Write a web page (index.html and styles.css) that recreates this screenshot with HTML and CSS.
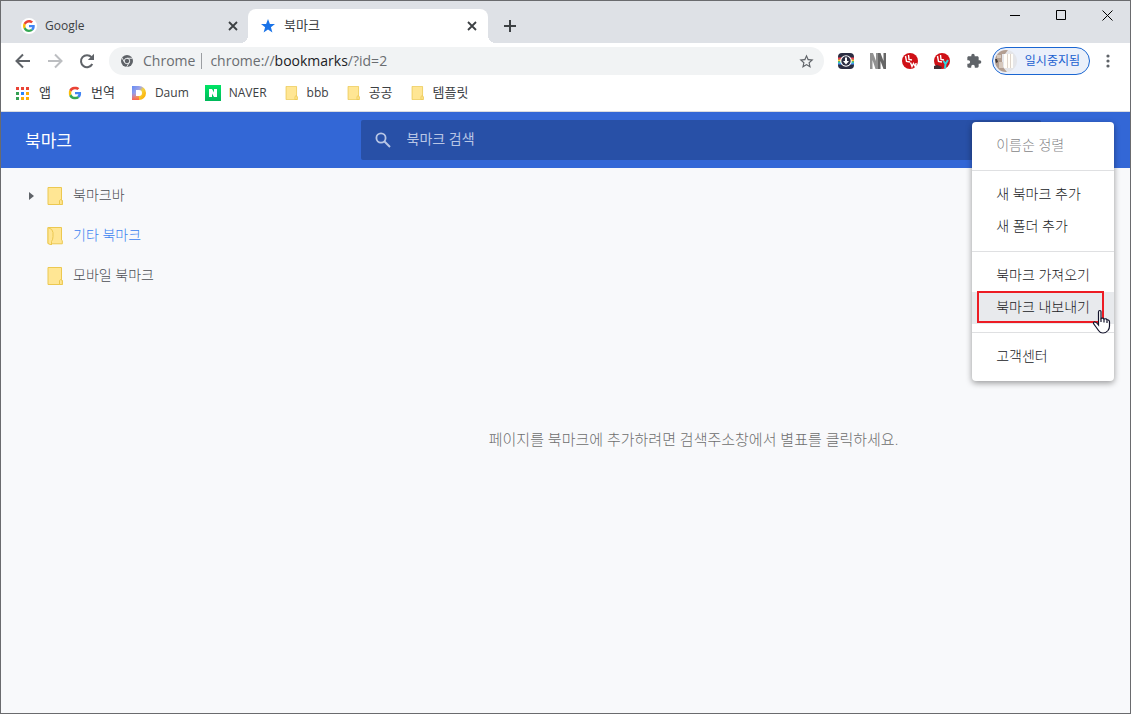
FILE: index.html
```html
<!DOCTYPE html>
<html lang="ko">
<head>
<meta charset="utf-8">
<meta name="viewport" content="width=device-width, initial-scale=1">
<title>북마크</title>
<link rel="stylesheet" href="styles.css">
</head>
<body>
<svg class="defs" width="0" height="0" aria-hidden="true">
  <defs>
    <symbol id="google" viewBox="0 0 48 48">
      <path fill="#ea4335" d="M24 9.500c3.500 0 6.700 1.200 9.200 3.600l6.900-6.900C35.900 2.400 30.500 0 24 0 14.600 0 6.500 5.400 2.600 13.200l8 6.200C12.400 13.700 17.700 9.500 24 9.500z"/>
      <path fill="#4285f4" d="M47 24.600c0-1.600-.2-3.100-.4-4.600H24v9h12.900c-.6 3-2.300 5.500-4.800 7.200l7.700 6C44.400 38 47 31.800 47 24.600z"/>
      <path fill="#fbbc05" d="M10.500 28.600A14.500 14.500 0 0 1 9.800 24c0-1.600.3-3.100.8-4.600l-8-6.200A24 24 0 0 0 0 24c0 3.900.9 7.500 2.600 10.800z"/>
      <path fill="#34a853" d="M24 48c6.500 0 11.900-2.100 15.900-5.800l-7.700-6c-2.200 1.400-4.900 2.300-8.200 2.300-6.300 0-11.600-4.200-13.500-9.900l-8 6.200C6.500 42.600 14.600 48 24 48z"/>
    </symbol>
    <symbol id="folder" viewBox="0 0 16 18">
      <path d="M1 .5h13.500v12.500l.8.800v3.700H1z" fill="#ffe694" stroke="#ecc850"/>
      <path d="M12.500 17.500v-4q1-1.800 2.800 0v4z" fill="#ffe694" stroke="#ecc850"/>
    </symbol>
    <symbol id="close" viewBox="0 0 10 10">
      <path d="M1 1l8 8M9 1L1 9" stroke="#3c4043" stroke-width="1.800"/>
    </symbol>
  </defs>
</svg>
<div class="window">
  <header class="tabstrip">
    <div class="tab">
      <span class="favicon-round"><svg width="12" height="12"><use href="#google"/></svg></span>
      <span class="tab-title">Google</span>
      <button class="tab-close" aria-label="탭 닫기"><svg width="10" height="10"><use href="#close"/></svg></button>
    </div>
    <div class="tab tab-active">
      <svg class="tab-icon" width="16" height="16" viewBox="0 0 16 16"><path fill="#1a73e8" d="M8 1l1.900 5h5.100l-4.100 3.200 1.500 5.300L8 11.400l-4.400 3.100 1.500-5.300L1 6h5.100z"/></svg>
      <span class="tab-title">북마크</span>
      <button class="tab-close" aria-label="탭 닫기"><svg width="10" height="10"><use href="#close"/></svg></button>
    </div>
    <button class="new-tab" aria-label="새 탭"><svg width="12" height="12" viewBox="0 0 12 12"><path d="M6 0v12M0 6h12" stroke="#3c4043" stroke-width="2"/></svg></button>
    <div class="window-controls">
      <button aria-label="최소화"><svg width="10" height="10"><path d="M0 5.500h10" stroke="#000"/></svg></button>
      <button aria-label="최대화"><svg width="10" height="10"><path d="M.5.5h9v9h-9z" fill="none" stroke="#000"/></svg></button>
      <button aria-label="닫기"><svg width="11" height="11"><path d="M.5.5l10 10M10.500.5l-10 10" stroke="#000"/></svg></button>
    </div>
  </header>

  <div class="toolbar">
    <button class="nav" aria-label="뒤로"><svg width="16" height="16" viewBox="0 0 16 16"><path d="M15 8H2M8 1.500L1.500 8 8 14.500" fill="none" stroke="#5f6368" stroke-width="2"/></svg></button>
    <button class="nav" aria-label="앞으로"><svg width="16" height="16" viewBox="0 0 16 16"><path d="M1 8h13M8 1.500L14.500 8 8 14.500" fill="none" stroke="#bcbec1" stroke-width="2"/></svg></button>
    <button class="nav" aria-label="새로고침"><svg width="16" height="16" viewBox="0 0 16 16"><path d="M13.300 11A6 6 0 1 1 12.500 4.200" fill="none" stroke="#5f6368" stroke-width="2"/><path d="M15 .8V7H8.800z" fill="#5f6368"/></svg></button>
    <div class="omnibox">
      <svg width="12" height="12" viewBox="0 0 24 24"><circle cx="12" cy="12" r="12" fill="#5f6368"/><circle cx="12" cy="12" r="5.500" fill="none" stroke="#f1f3f4" stroke-width="1.800"/><path d="M12 6.500h11M7.200 14.700L1.700 5.200M16.800 14.700L11.300 24" stroke="#f1f3f4" stroke-width="1.800"/></svg>
      <span class="origin">Chrome</span>
      <div class="url" role="textbox" contenteditable="true" spellcheck="false" aria-label="주소창">chrome://<span class="url-host">bookmarks</span>/?id=2</div>
      <button class="star" aria-label="북마크에 추가"><svg width="17" height="17" viewBox="0 0 24 24"><path fill="#5f6368" d="M22 9.240l-7.190-.62L12 2 9.190 8.630 2 9.240l5.460 4.730L5.820 21 12 17.270 18.180 21l-1.630-7.030zM12 15.400l-3.760 2.270 1-4.280-3.320-2.880 4.380-.38L12 6.100l1.710 4.040 4.380.38-3.320 2.880 1 4.280z"/></svg></button>
    </div>
    <div class="extensions">
      <button aria-label="다운로더"><svg width="16" height="16" viewBox="0 0 16 16"><rect width="16" height="16" rx="4" fill="#2b2d42"/><path d="M0 4.500h16v2H0z" fill="#ef4050"/><path d="M0 6.500h16v2H0z" fill="#ffd23c"/><path d="M0 8.500h16v1.500H0z" fill="#38cfa6"/><path d="M0 10h16v1.500H0z" fill="#478ff0"/><circle cx="8" cy="8" r="5.800" fill="#fff"/><circle cx="8" cy="8" r="4.700" fill="#2b2d42"/><path d="M7 4.500h2V8h2l-3 3.500L5 8h2z" fill="#fff"/></svg></button>
      <button aria-label="노트"><svg width="16" height="16" viewBox="0 0 16 16"><path d="M0 16V0h3l3 8V0h2v16H5.500L2.500 7v9z" fill="#929292"/><path d="M8 16V0h2.500l3 8V0H16v16h-2.500l-3-8v8z" fill="#666"/></svg></button>
      <button aria-label="번역 확장"><svg width="16" height="16" viewBox="0 0 16 16"><circle cx="8" cy="8" r="8" fill="#cf1016"/><path d="M3.500 3l1 5.500L8 9M6.500 2L7 6.500l3 .5" fill="none" stroke="#fff" stroke-width="1.400"/><path d="M8.500 9.500l1.500 4 1.500-3 2 3.500.5-4" fill="none" stroke="#fff" stroke-width="1.400"/></svg></button>
      <button aria-label="영상 확장"><svg width="16" height="16" viewBox="0 0 16 16"><circle cx="8" cy="8" r="8" fill="#cf1016"/><path d="M3.500 3l1 5.500L8 9M6.500 2L7 6.500l3 .5" fill="none" stroke="#fff" stroke-width="1.400"/><path d="M9.500 8l2 3 2.500-4M11.500 11l-.5 4.500" fill="none" stroke="#2bd5df" stroke-width="2"/><path d="M0 13l3-1 3 1 2 1-1 2H0z" fill="#402e35"/></svg></button>
      <button aria-label="확장 프로그램"><svg width="16" height="16" viewBox="0 0 24 24"><path fill="#5f6368" d="M20.500 11H19V7c0-1.100-.9-2-2-2h-4V3.500a2.500 2.500 0 0 0-5 0V5H4c-1.100 0-2 .9-2 2v3.800h1.500a2.700 2.700 0 0 1 0 5.400H2V20c0 1.100.9 2 2 2h3.800v-1.500a2.700 2.700 0 0 1 5.400 0V22H17c1.100 0 2-.9 2-2v-4h1.500a2.500 2.500 0 0 0 0-5z"/></svg></button>
    </div>
    <button class="profile">
      <svg width="22" height="22" viewBox="0 0 22 22"><defs><clipPath id="avatar"><circle cx="11" cy="11" r="11"/></clipPath></defs><g clip-path="url(#avatar)"><path fill="#e4e5e9" d="M0 0h22v22H0z"/><path fill="#b29e91" d="M0 0h13l-3 4H7v12l5 6H0z"/><path fill="#d5c8bd" d="M2 5h4v3H2zM4 12h4v6H4z"/><path fill="#3f3938" d="M0 9h2l1 3-2 1z"/><path fill="#fffdf8" d="M9 4h9v14H9z"/><path stroke="#ded4ca" d="M12.500 4v14M15.500 4v14"/></g></svg>
      <span>일시중지됨</span>
    </button>
    <button class="more" aria-label="Chrome 메뉴"><svg width="4" height="14" fill="#5f6368"><circle cx="2" cy="2" r="1.600"/><circle cx="2" cy="7" r="1.600"/><circle cx="2" cy="12" r="1.600"/></svg></button>
  </div>

  <nav class="bookmark-bar" aria-label="북마크바">
    <a href="#"><svg width="16" height="16" viewBox="0 0 16 16"><path fill="#ea4335" d="M1 2h3v3H1zM6 2h3v3H6zM11 2h3v3h-3z"/><path fill="#34a053" d="M1 7h3v3H1zM1 12h3v3H1z"/><path fill="#2684fc" d="M6 7h3v3H6z"/><path fill="#fbac04" d="M11 7h3v3h-3zM6 12h3v3H6zM11 12h3v3h-3z"/></svg><span class="ko">앱</span></a>
    <a href="#"><svg width="16" height="16" viewBox="-6 -6 60 60"><use href="#google" width="48" height="48"/></svg><span class="ko">번역</span></a>
    <a href="#"><svg width="16" height="16" viewBox="0 0 16 16"><defs><linearGradient id="daum" x1="0" y1="0" x2="1" y2=".7"><stop offset="0" stop-color="#648cf5"/><stop offset=".45" stop-color="#a0a4e6"/><stop offset=".65" stop-color="#f5d23c"/><stop offset="1" stop-color="#ffae00"/></linearGradient><linearGradient id="daum2" x1="0" y1="0" x2="0" y2="1"><stop offset=".5" stop-color="#fa6464" stop-opacity="0"/><stop offset="1" stop-color="#fa6450"/></linearGradient></defs><path fill="url(#daum)" fill-rule="evenodd" d="M1 1h7a7 7 0 0 1 0 14H1zM5 5v6h3a3 3 0 0 0 0-6z"/><path fill="url(#daum2)" fill-rule="evenodd" d="M1 1h7v4H5v6h3v4H1z"/></svg><span>Daum</span></a>
    <a href="#"><svg width="16" height="16" viewBox="0 0 16 16"><defs><linearGradient id="naver" x1="0" y1="0" x2="0" y2="1"><stop stop-color="#00e565"/><stop offset="1" stop-color="#00b85a"/></linearGradient></defs><path fill="url(#naver)" d="M0 0h16v16H0z"/><path fill="#fff" d="M4 4h3l2 3.500V4h3v8H9L7 8.500V12H4z"/></svg><span>NAVER</span></a>
    <a href="#"><svg width="16" height="16"><use href="#folder" x="2" y="1" width="13" height="14"/></svg><span>bbb</span></a>
    <a href="#"><svg width="16" height="16"><use href="#folder" x="2" y="1" width="13" height="14"/></svg><span class="ko">공공</span></a>
    <a href="#"><svg width="16" height="16"><use href="#folder" x="2" y="1" width="13" height="14"/></svg><span class="ko">템플릿</span></a>
  </nav>

  <div class="page">
    <div class="page-header">
      <h1>북마크</h1>
      <div class="search-area">
        <label class="search">
          <svg width="16" height="16" viewBox="0 0 16 16"><circle cx="6" cy="6" r="4.600" fill="none" stroke="#b8c6e5" stroke-width="1.800"/><path d="M9.500 9.500l5.500 5.500" stroke="#b8c6e5" stroke-width="2"/></svg>
          <input type="text" placeholder="북마크 검색" aria-label="북마크 검색">
        </label>
      </div>
    </div>
    <div class="page-body">
      <nav class="tree" aria-label="폴더">
        <a href="#"><span class="twisty"><svg width="5" height="8"><path d="M0 0l5 4-5 4z" fill="#5f6368"/></svg></span><svg width="16" height="18"><use href="#folder"/></svg><span class="tree-label">북마크바</span></a>
        <a href="#" class="selected"><span class="twisty"></span><svg width="16" height="18" viewBox="0 0 16 18"><path d="M1 .5h13.500v12.500l.8.800v3H4L1 16.500z" fill="#ffe694" stroke="#ecc850"/><path d="M1 .5q5 1.500 5 5v4q0 3-1.500 5v3.500L1 16.500z" fill="#ffe694" stroke="#ecc850"/></svg><span class="tree-label">기타 북마크</span></a>
        <a href="#"><span class="twisty"></span><svg width="16" height="18"><use href="#folder"/></svg><span class="tree-label">모바일 북마크</span></a>
      </nav>
      <main class="content"><p>페이지를 북마크에 추가하려면 검색주소창에서 별표를 클릭하세요.</p></main>
    </div>

    <div class="menu" role="menu">
      <button role="menuitem" disabled>이름순 정렬</button>
      <hr>
      <button role="menuitem">새 북마크 추가</button>
      <button role="menuitem">새 폴더 추가</button>
      <hr>
      <button role="menuitem">북마크 가져오기</button>
      <div class="menu-current">
        <button role="menuitem">북마크 내보내기</button>
        <span class="highlight"></span>
        <svg class="pointer" width="20" height="26" viewBox="0 0 20 26"><path d="M6.500 15V3q0-1.500 1.300-1.500T9 3v6.500q2.500-1 3 .5 2.500-.8 3 1 2.500-.3 2.500 2v4q0 2.500-1.500 4.500-2 2.500-5 2.500T6.500 21.500L4 18l-2.500-3.500q0-1.800 1.500-1.500 1.500.3 3.500 3z" fill="#fff" stroke="#14142c" stroke-width="1.200"/><path d="M9 9.500v3.500M12 10v3.500M15 11.500v2.500" stroke="#14142c" stroke-width="1.200"/></svg>
      </div>
      <hr>
      <button role="menuitem">고객센터</button>
    </div>
  </div>
</div>
</body>
</html>
```
FILE: styles.css
```css
* { box-sizing: border-box; }

body {
  margin: 0;
  font-family: "Open Sans", "Noto Sans CJK KR", sans-serif;
  font-size: 12px;
  color: #3c4043;
}

button {
  margin: 0;
  padding: 0;
  border: 0;
  background: none;
  font: inherit;
  color: inherit;
  display: flex;
  align-items: center;
  justify-content: center;
}

svg { flex: none; display: block; }
a { color: inherit; text-decoration: none; }
.defs { position: absolute; }

.window {
  min-height: 100vh;
  border: 1px solid #6a6b6e;
  display: flex;
  flex-direction: column;
  background: #fff;
}

/* Tab strip */
.tabstrip {
  display: flex;
  align-items: flex-end;
  height: 42px;
  background: #dee1e6;
}

.tab {
  position: relative;
  display: flex;
  align-items: center;
  gap: 8px;
  width: 240px;
  height: 34px;
  padding: 0 8px 0 12px;
}

.tab:first-child { width: 239px; margin-left: 8px; }

.tab-active {
  background: #fff;
  border-radius: 8px 8px 0 0;
  font-size: 13px;
}

.tab-active::before,
.tab-active::after {
  content: "";
  position: absolute;
  bottom: 0;
  width: 8px;
  height: 8px;
}

.tab-active::before {
  right: 100%;
  background: radial-gradient(circle at 0 0, transparent 8px, #fff 8px);
}

.tab-active::after {
  left: 100%;
  background: radial-gradient(circle at 100% 0, transparent 8px, #fff 8px);
}

.favicon-round {
  display: flex;
  align-items: center;
  justify-content: center;
  width: 16px;
  height: 16px;
  border-radius: 50%;
  background: #fff;
}

.tab-title { flex: 1; padding-bottom: 2px; }
.tab-active .tab-title { padding-bottom: 4px; }
.tab-close { width: 16px; height: 16px; }
.tab:first-child .tab-close { margin-right: -1px; }
.new-tab { width: 28px; height: 34px; margin-left: 8px; }

.window-controls {
  display: flex;
  align-self: flex-start;
  margin-left: auto;
}

.window-controls button { width: 46px; height: 28px; }

/* Toolbar */
.toolbar {
  display: flex;
  align-items: center;
  height: 36px;
  padding: 0 8px 0 6px;
}

.nav { width: 32px; height: 28px; }

.omnibox {
  flex: 1;
  display: flex;
  align-items: center;
  height: 28px;
  margin-left: 6px;
  padding: 0 9px 0 12px;
  border-radius: 14px;
  background: #f1f3f4;
  font-size: 14px;
  line-height: 16px;
  color: #6a6d71;
}

.origin {
  margin-left: 10px;
  padding-right: 6px;
  border-right: 1px solid #9b9ea2;
}

.url { flex: 1; margin-left: 8px; outline: none; white-space: nowrap; }
.url-host { color: #202124; }

.extensions { display: flex; margin-left: 6px; }
.extensions button { width: 32px; height: 28px; }

.profile {
  gap: 8px;
  height: 28px;
  margin-left: 2px;
  padding: 0 9px 0 2px;
  border: 1px solid #1a66d2;
  border-radius: 14px;
  background: #ebf0fa;
  color: #1a5fd0;
}

.profile span { padding-bottom: 2px; }

.more { width: 28px; height: 28px; margin-left: 4px; }

/* Bookmark bar */
.bookmark-bar {
  display: flex;
  align-items: center;
  gap: 16px;
  height: 33px;
  padding: 0 14px 5px;
  border-bottom: 1px solid #dadce0;
}

.bookmark-bar a { display: flex; align-items: center; gap: 8px; height: 27px; }
.bookmark-bar .ko { padding-bottom: 2px; font-size: 13px; }

/* Bookmark manager */
.page {
  position: relative;
  flex: 1;
  display: flex;
  flex-direction: column;
  background: #f8f9fb;
}

.page-header {
  display: flex;
  align-items: center;
  height: 56px;
  background: #3367d6;
}

.page-header h1 {
  flex: none;
  width: 256px;
  margin: 0;
  padding: 0 0 2px 24px;
  font-size: 17px;
  font-weight: 400;
  color: #fff;
}

.search-area { flex: 1; padding-left: 14px; }

.search {
  display: flex;
  align-items: center;
  gap: 16px;
  max-width: 680px;
  height: 40px;
  margin: 0 auto;
  padding-left: 14px;
  border-radius: 2px;
  background: #2850a7;
}

.search input {
  flex: 1;
  min-width: 0;
  padding: 0 0 4px;
  border: 0;
  outline: 0;
  background: none;
  font: inherit;
  font-size: 14px;
  color: #fff;
}

.search input::placeholder { color: #b8c6e5; }

.page-body { flex: 1; display: flex; }

.tree {
  flex: none;
  width: 256px;
  padding-top: 8px;
  font-size: 14px;
  font-weight: 300;
}

.tree a {
  display: flex;
  align-items: center;
  height: 40px;
  color: #4c4f54;
}

.tree .selected { color: #3b82f0; }
.tree-label { margin-left: 10px; padding-bottom: 4px; }
.twisty { display: flex; justify-content: flex-end; width: 33px; margin-right: 13px; }

.content {
  flex: 1;
  display: flex;
  align-items: center;
  justify-content: center;
}

.content p {
  margin: 0;
  padding-bottom: 4px;
  font-size: 15px;
  font-weight: 300;
  color: #6e6e6e;
}

/* Overflow menu */
.menu {
  position: absolute;
  top: 10px;
  right: 16px;
  padding: 8px 0;
  border-radius: 4px;
  background: #fff;
  box-shadow: 0 2px 6px rgba(0, 0, 0, .4);
  font-size: 14px;
  font-weight: 300;
  color: #202124;
}

.menu button {
  justify-content: flex-start;
  width: 100%;
  height: 32px;
  padding: 0 24px 4px;
  white-space: nowrap;
}

.menu button:disabled { color: #858688; }

.menu hr {
  height: 1px;
  margin: 8px 0;
  border: 0;
  background: #dfe0e2;
}

.menu-current { position: relative; background: #e8eaed; }

.highlight {
  position: absolute;
  inset: -1px 10px 1px 5px;
  border: 2px solid #ed1c24;
  pointer-events: none;
}

.pointer { position: absolute; top: 17px; right: 2px; }
```
